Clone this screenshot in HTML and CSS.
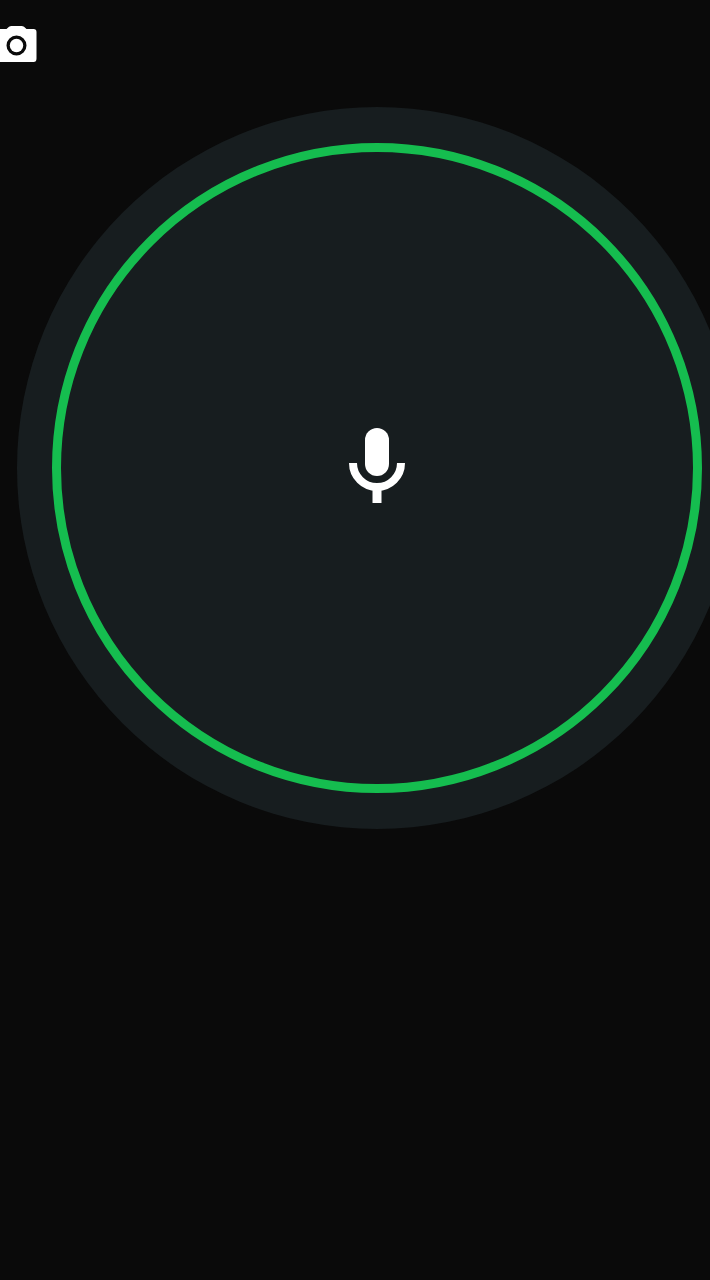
FILE: index.html
```html
<!DOCTYPE html>
<html lang="en">
<head>
<meta charset="utf-8">
<title>Voice</title>
<link rel="stylesheet" href="styles.css">
</head>
<body>
<main class="screen">
  <button class="camera" aria-label="Camera">
    <svg class="camera-icon" viewBox="0 0 37 37" width="37" height="37">
      <path fill="#fff" fill-rule="evenodd" d="M6.500 4 L9 1.800 Q10 1 11.500 1 H21.500 Q23 1 24 1.800 L26.500 4 H33.500 Q36.500 4 36.500 7 V33.500 Q36.500 37 33.500 37 H0 V4 Z M16.500 10.500 A10 10 0 1 0 16.500 30.500 A10 10 0 1 0 16.500 10.500 Z"/>
      <circle cx="16.500" cy="20.500" r="6.700" fill="#fff"/>
    </svg>
  </button>
  <div class="halo">
    <div class="ring">
      <svg class="mic" viewBox="0 0 56 75" width="56" height="75">
        <rect x="16" y="0" width="24" height="48" rx="12" fill="#fff"/>
        <path d="M4 35 A24 24 0 0 0 52 35" fill="none" stroke="#fff" stroke-width="8"/>
        <rect x="23.500" y="55" width="9" height="20" fill="#fff"/>
      </svg>
    </div>
  </div>
</main>
</body>
</html>
```
FILE: styles.css
```css
html, body {
  margin: 0;
  height: 100%;
  background: #0a0a0a;
  overflow: hidden;
}
.screen {
  display: flex;
  flex-direction: column;
  align-items: flex-start;
  width: 710px;
  height: 1280px;
  padding-top: 25px;
  box-sizing: border-box;
  overflow: hidden;
}
.camera {
  display: block;
  margin: 0;
  padding: 0;
  border: 0;
  width: 37px;
  height: 37px;
  background: none;
}
.camera-icon {
  display: block;
}
.halo {
  flex: none;
  display: grid;
  place-items: center;
  width: 720px;
  height: 722px;
  margin: 45px 0 0 17px;
  border-radius: 50%;
  background: #171d1f;
}
.ring {
  display: grid;
  place-items: center;
  width: 650px;
  height: 650px;
  box-sizing: border-box;
  border: 9px solid #15bd4f;
  border-radius: 50%;
}
.mic {
  display: block;
  margin-top: -5px;
}
```
